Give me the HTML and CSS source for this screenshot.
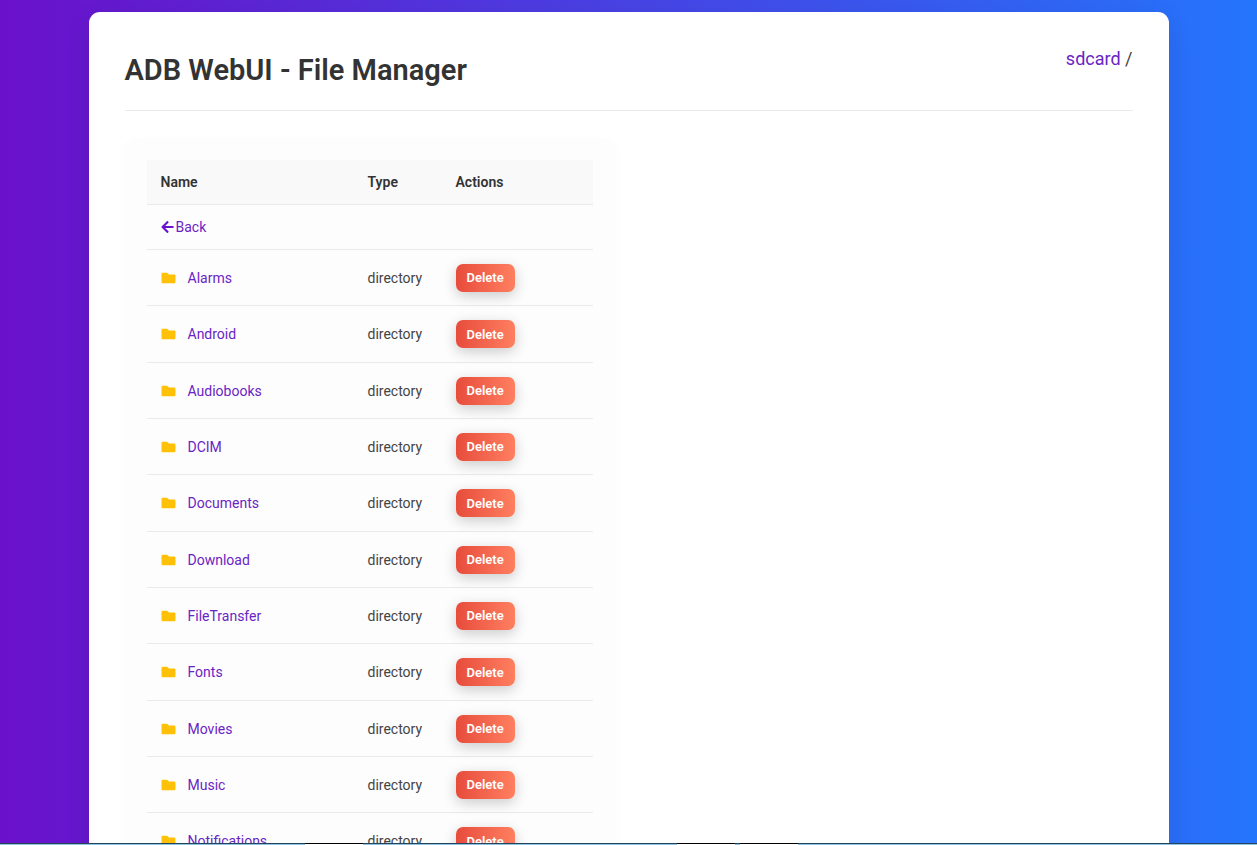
FILE: index.html
```
<!DOCTYPE html>
<html lang="en">
<head>
<meta charset="utf-8">
<title>ADB WebUI - File Manager</title>
<link rel="stylesheet" href="styles.css">
</head>
<body>
<svg class="sprite" aria-hidden="true">
  <symbol id="folder" viewBox="0 0 512 512"><path d="M464 128H272l-64-64H48C21.500 64 0 85.500 0 112v288c0 26.500 21.500 48 48 48h416c26.500 0 48-21.500 48-48V176c0-26.500-21.500-48-48-48z"/></symbol>
  <symbol id="arrow" viewBox="0 0 448 512"><path d="M257.500 445.100l-22.200 22.200c-9.400 9.400-24.600 9.400-33.900 0L7 273c-9.400-9.400-9.400-24.600 0-33.900L201.400 44.700c9.400-9.400 24.600-9.400 33.900 0l22.200 22.200c9.500 9.500 9.300 25-.4 34.300L136.600 216H424c13.300 0 24 10.700 24 24v32c0 13.300-10.700 24-24 24H136.600l120.500 114.800c9.800 9.300 10 24.800.4 34.300z"/></symbol>
</svg>
<main class="container">
  <header class="header">
    <h1 class="title">ADB WebUI - File Manager</h1>
    <nav class="breadcrumb"><a href="#">sdcard</a> /</nav>
  </header>
  <div class="content">
    <section class="panel">
      <table class="files">
        <colgroup><col class="col-name"><col class="col-type"><col></colgroup>
        <thead>
          <tr><th>Name</th><th>Type</th><th>Actions</th></tr>
        </thead>
        <tbody>
          <tr class="back"><td colspan="3"><a href="#"><svg class="arrow"><use href="#arrow"/></svg>Back</a></td></tr>
          <tr><td><svg class="folder"><use href="#folder"/></svg><a href="#">Alarms</a></td><td>directory</td><td><button class="delete">Delete</button></td></tr>
          <tr><td><svg class="folder"><use href="#folder"/></svg><a href="#">Android</a></td><td>directory</td><td><button class="delete">Delete</button></td></tr>
          <tr><td><svg class="folder"><use href="#folder"/></svg><a href="#">Audiobooks</a></td><td>directory</td><td><button class="delete">Delete</button></td></tr>
          <tr><td><svg class="folder"><use href="#folder"/></svg><a href="#">DCIM</a></td><td>directory</td><td><button class="delete">Delete</button></td></tr>
          <tr><td><svg class="folder"><use href="#folder"/></svg><a href="#">Documents</a></td><td>directory</td><td><button class="delete">Delete</button></td></tr>
          <tr><td><svg class="folder"><use href="#folder"/></svg><a href="#">Download</a></td><td>directory</td><td><button class="delete">Delete</button></td></tr>
          <tr><td><svg class="folder"><use href="#folder"/></svg><a href="#">FileTransfer</a></td><td>directory</td><td><button class="delete">Delete</button></td></tr>
          <tr><td><svg class="folder"><use href="#folder"/></svg><a href="#">Fonts</a></td><td>directory</td><td><button class="delete">Delete</button></td></tr>
          <tr><td><svg class="folder"><use href="#folder"/></svg><a href="#">Movies</a></td><td>directory</td><td><button class="delete">Delete</button></td></tr>
          <tr><td><svg class="folder"><use href="#folder"/></svg><a href="#">Music</a></td><td>directory</td><td><button class="delete">Delete</button></td></tr>
          <tr><td><svg class="folder"><use href="#folder"/></svg><a href="#">Notifications</a></td><td>directory</td><td><button class="delete">Delete</button></td></tr>
        </tbody>
      </table>
    </section>
  </div>
</main>
<div class="taskbar"><span class="task task-first"></span><span class="task"></span><span class="task"></span></div>
</body>
</html>
```
FILE: styles.css
```
* {
  box-sizing: border-box;
}

body {
  margin: 0;
  height: 100vh;
  overflow: hidden;
  padding: 12px 18px;
  font-family: Roboto, "Liberation Sans", sans-serif;
  font-size: 14px;
  font-weight: 400;
  color: #444;
  background: linear-gradient(to right, #6a11cb 0%, #2575fc 100%);
}

a {
  color: #6a24c4;
  text-decoration: none;
}

.sprite {
  display: none;
}

.container {
  max-width: 1080px;
  margin: 0 auto;
  padding: 36px;
  background: #fff;
  border-radius: 11px;
  box-shadow: 0 9px 27px rgba(0, 0, 0, 0.1);
}

.header {
  display: flex;
  justify-content: space-between;
  align-items: flex-start;
  padding-bottom: 18px;
  margin-bottom: 27px;
  border-bottom: 1px solid #eaeaea;
}

.title {
  margin: 0;
  padding-top: 1px;
  font-size: 29px;
  font-weight: 600;
  line-height: 43px;
  color: #333;
}

.breadcrumb {
  font-size: 18px;
  line-height: 22px;
}

.content {
  display: grid;
  grid-template-columns: repeat(2, 1fr);
  gap: 28px;
}

.panel {
  padding: 22px;
  background: #fdfdfd;
  border-radius: 11px;
  box-shadow: 0 4px 14px rgba(0, 0, 0, 0.02);
}

.files {
  width: 100%;
  table-layout: fixed;
  border-collapse: separate;
  border-spacing: 0;
}

.col-name {
  width: 207px;
}

.col-type {
  width: 88px;
}

.files th,
.files td {
  padding: 0 14px;
  text-align: left;
  vertical-align: middle;
  border-bottom: 1px solid #eaeaea;
}

.files th {
  height: 45px;
  font-weight: 600;
  color: #333;
  background: #f9f9f9;
}

.files td {
  height: 56px;
}

.files tr:nth-child(3n) td {
  height: 57px;
}

.files .back td {
  height: 45px;
}

.arrow {
  width: 13px;
  height: 14px;
  margin-right: 2px;
  vertical-align: -2px;
  fill: #6a11cb;
}

.folder {
  width: 15px;
  height: 14px;
  margin-right: 12px;
  vertical-align: -2px;
  fill: #ffc107;
}

.delete {
  display: block;
  height: 28px;
  padding: 0 11px;
  border: 0;
  border-radius: 7px;
  font-family: Roboto, "Liberation Sans", sans-serif;
  font-size: 13px;
  font-weight: 600;
  color: #fff;
  background: linear-gradient(to right, #e74c3c, #ff7f60);
  box-shadow: 0 4px 14px rgba(0, 0, 0, 0.2);
}

.taskbar {
  position: fixed;
  left: 0;
  right: 0;
  bottom: 0;
  display: flex;
  gap: 5px;
  height: 2px;
  border-top: 1px solid #23445c;
  background: #8fc3df;
}

.task {
  width: 58px;
  height: 2px;
  margin-top: -1px;
  border-top: 1px solid #000;
  background: #fff;
}

.task-first {
  margin-left: 305px;
  margin-right: 309px;
}
```
